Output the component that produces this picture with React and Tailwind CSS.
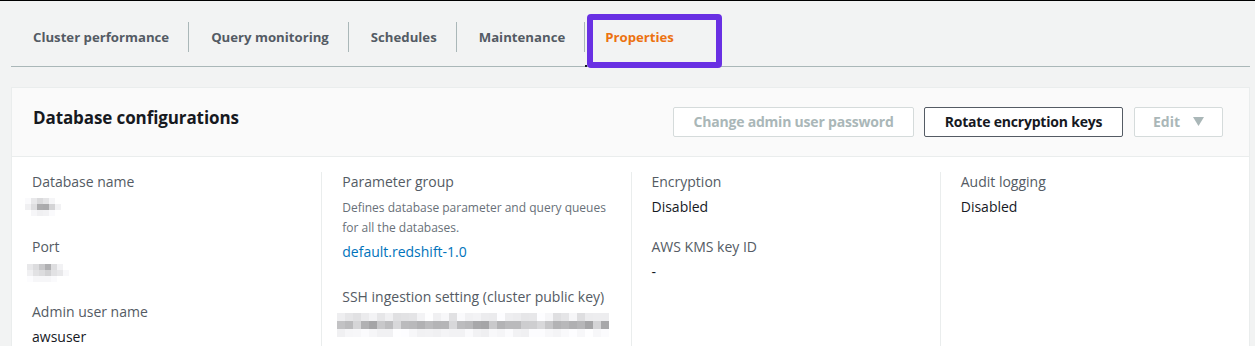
import React from "react";

const F = { fontFamily: '"Open Sans", "Noto Sans", sans-serif' };

function Pixels({ rows, cell = 6 }) {
  return (
    <div className="flex flex-col">
      {rows.map((r, i) => (
        <div key={i} className="flex">
          {r.map((g, j) => (
            <div
              key={j}
              style={{ width: cell, height: cell, background: g }}
            />
          ))}
        </div>
      ))}
    </div>
  );
}

const gray = (v) => `rgb(${v},${v},${v + 2})`;

const dbRows = [
  [250, 232, 218, 228, 245, 255].map(gray),
  [240, 222, 172, 170, 212, 242].map(gray),
  [255, 246, 240, 242, 250, 255].map(gray),
];
const portRows = [
  [232, 220, 200, 176, 222, 242, 255].map(gray),
  [240, 226, 220, 210, 226, 232, 248].map(gray),
  [252, 246, 246, 246, 250, 255, 255].map(gray),
];

function sshRows() {
  const n = 34;
  const rows = [];
  let s = 7;
  const rnd = () => {
    s = (s * 9301 + 49297) % 233280;
    return s / 233280;
  };
  const mids = [];
  const tops = [];
  const bots = [];
  for (let i = 0; i < n; i++) {
    tops.push(gray(Math.round(222 + rnd() * 32)));
    mids.push(gray(Math.round(160 + rnd() * 60)));
    bots.push(gray(Math.round(238 + rnd() * 16)));
  }
  rows.push(tops, mids, bots);
  return rows;
}

function Field({ label, children, className = "" }) {
  return (
    <div className={className}>
      <div className="text-[14px] leading-[22px] text-[#545b64]">{label}</div>
      {children}
    </div>
  );
}

export default function App() {
  const tabs = ["Cluster performance", "Query monitoring", "Schedules", "Maintenance"];
  return (
    <div
      className="w-[1255px] h-[346px] overflow-hidden bg-[#f2f3f3] border-t border-black"
      style={F}
    >
      {/* Tabs */}
      <div className="ml-[11px] mr-[5px] mt-[13px] h-[53px] flex items-start border-b border-[#aab7b8] relative">
        {tabs.map((t) => (
          <div key={t} className="flex items-start h-full">
            <div className="pl-[22px] pr-[19px] pt-[13px] text-[13.2px] leading-[20px] font-bold text-[#545b64]">
              {t}
            </div>
            <div className="w-px h-[30px] mt-[8px] bg-[#aab7b8]" />
          </div>
        ))}
        <div className="relative h-full pl-[20px] pr-[48px] pt-[13px]">
          <div className="text-[13.2px] leading-[20px] font-bold text-[#ec7211]">Properties</div>
          <div className="absolute left-[2px] top-0 w-[135px] h-[54px] border-[6px] border-[#6930e3] rounded-[4px]" />
          <div className="absolute left-0 bottom-[-1px] w-[2px] h-[2px] bg-[#16191f]" />
        </div>
      </div>

      {/* Panel */}
      <div className="ml-[11px] mr-[5px] mt-[20px] border border-[#eaeded] bg-white">
        <div className="h-[69px] bg-[#fafafa] border-b border-[#eaeded] flex items-center pl-[21px] pr-[26px]">
          <h2 className="text-[17px] font-bold text-[#16191f] -mt-[8px] tracking-[-0.1px]">Database configurations</h2>
          <div className="ml-auto flex items-center gap-[10px] -mt-[1px]">
            <button className="h-[30px] w-[241px] border border-[#d5dbdb] bg-white rounded-[2px] text-[14px] font-bold text-[#aab7b8] tracking-[-0.2px]">
              Change admin user password
            </button>
            <button className="h-[30px] w-[199px] border border-[#545b64] bg-white rounded-[2px] text-[14px] font-bold text-[#16191f] tracking-[-0.2px]">
              Rotate encryption keys
            </button>
            <button className="h-[30px] w-[89px] ml-px border border-[#d5dbdb] bg-white rounded-[2px] text-[14px] font-bold text-[#aab7b8] flex items-center justify-center gap-[13px]">
              Edit
              <svg width="11" height="9" viewBox="0 0 11 9">
                <path d="M0 0 L11 0 L5.5 9 Z" fill="#aab7b8" />
              </svg>
            </button>
          </div>
        </div>

        <div className="grid grid-cols-4 pt-[14px] h-[200px]">
          <div className="pl-[20px] pr-4">
            <Field label="Database name">
              <div className="mt-[5px] -ml-[7px]">
                <Pixels rows={dbRows} />
              </div>
            </Field>
            <Field label="Port" className="mt-[20px]">
              <div className="mt-[6px] -ml-[5px]">
                <Pixels rows={portRows} />
              </div>
            </Field>
            <Field label="Admin user name" className="mt-[19px]">
              <div className="mt-[3px] text-[14px] leading-[22px] text-[#16191f]">awsuser</div>
            </Field>
          </div>

          <div className="pl-[20px] pr-4 border-l border-[#eaeded] mt-px">
            <Field label="Parameter group" className="-mt-px">
              <div className="mt-[5px] text-[12px] leading-[20px] text-[#687078]">
                Defines database parameter and query queues
                <br />
                for all the databases.
              </div>
              <div className="mt-[3px] text-[14px] leading-[22px] text-[#0073bb]">default.redshift-1.0</div>
            </Field>
            <Field label="SSH ingestion setting (cluster public key)" className="mt-[23px]">
              <div className="mt-[5px] -ml-[5px]">
                <Pixels rows={sshRows()} cell={8} />
              </div>
            </Field>
          </div>

          <div className="pl-[20px] pr-4 border-l border-[#eaeded] mt-px">
            <Field label="Encryption" className="-mt-px">
              <div className="mt-[3px] text-[14px] leading-[22px] text-[#16191f]">Disabled</div>
            </Field>
            <Field label="AWS KMS key ID" className="mt-[18px]">
              <div className="mt-[3px] text-[14px] leading-[22px] text-[#16191f]">-</div>
            </Field>
          </div>

          <div className="pl-[20px] pr-4 border-l border-[#eaeded] mt-px">
            <Field label="Audit logging" className="-mt-px">
              <div className="mt-[3px] text-[14px] leading-[22px] text-[#16191f]">Disabled</div>
            </Field>
          </div>
        </div>
      </div>
    </div>
  );
}
